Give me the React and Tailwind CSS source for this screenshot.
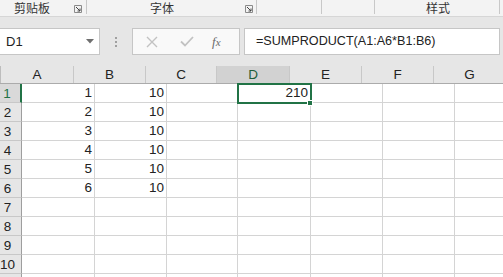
import React from "react";

const cols = [
  { l: "A", w: 73 },
  { l: "B", w: 72 },
  { l: "C", w: 71 },
  { l: "D", w: 73 },
  { l: "E", w: 72 },
  { l: "F", w: 72 },
  { l: "G", w: 72 },
];

const data = [
  ["1", "10", "", "210"],
  ["2", "10"],
  ["3", "10"],
  ["4", "10"],
  ["5", "10"],
  ["6", "10"],
  [],
  [],
  [],
  [],
  [],
];

function Launcher() {
  return (
    <svg width="8" height="8" viewBox="0 0 8 8" className="block">
      <path d="M0.5 0.5 H7.5 V7.5 H0.5 Z" fill="none" stroke="#8a8a8a" strokeWidth="1" />
      <path d="M2 2 L6 6 M3.5 6 H6 V3.5" fill="none" stroke="#444" strokeWidth="1" />
    </svg>
  );
}

export default function App() {
  const font = { fontFamily: '"Liberation Sans", Arial, "Noto Sans CJK SC", sans-serif' };
  return (
    <div className="w-[503px] h-[277px] overflow-hidden bg-white text-[#222]" style={font}>
      {/* ribbon group labels */}
      <div className="h-[17px] bg-[#f3f3f3] border-b border-[#d6d6d6] flex items-start text-[12px] leading-[16px] text-[#333]" style={{ fontFamily: '"Noto Sans CJK SC", "Liberation Sans", sans-serif' }}>
        <div className="w-[87px] h-[14px] flex items-start border-r border-[#c8c8c8]">
          <span className="ml-[14px]">剪贴板</span>
          <span className="ml-auto mr-[4px] mt-[5px]"><Launcher /></span>
        </div>
        <div className="w-[170px] h-[14px] flex items-start border-r border-[#c8c8c8]">
          <span className="ml-[63px]">字体</span>
          <span className="ml-auto mr-[3px] mt-[5px]"><Launcher /></span>
        </div>
        <div className="w-[65px] h-[14px] border-r border-[#c8c8c8]" />
        <div className="w-[53px] h-[14px] border-r border-[#c8c8c8]" />
        <div className="w-[125px] h-[14px] flex items-start border-r border-[#c8c8c8]">
          <span className="ml-[51px]">样式</span>
        </div>
      </div>

      {/* formula bar */}
      <div className="h-[49px] bg-[#e6e6e6] pt-[11px] flex items-start">
        <div className="w-[100px] h-[27px] bg-white border border-[#c6c6c6] border-l-0 flex items-center text-[13px]">
          <span className="ml-[6px]">D1</span>
          <svg width="8" height="5" viewBox="0 0 8 5" className="ml-auto mr-[5px]">
            <path d="M0 0 H8 L4 4.5 Z" fill="#6f6f6f" />
          </svg>
        </div>
        <div className="w-[32px] h-[27px] flex flex-col items-center justify-center gap-[2px]">
          <div className="w-[2px] h-[2px] bg-[#a0a0a0]" />
          <div className="w-[2px] h-[2px] bg-[#a0a0a0]" />
          <div className="w-[2px] h-[2px] bg-[#a0a0a0]" />
        </div>
        <div className="w-[108px] h-[27px] bg-[#f9f9f9] border border-[#c6c6c6] flex items-center">
          <svg width="12" height="12" viewBox="0 0 12 12" className="ml-[13px]">
            <path d="M1 1 L11 11 M11 1 L1 11" stroke="#c2c2c2" strokeWidth="1.4" fill="none" />
          </svg>
          <svg width="14" height="11" viewBox="0 0 14 11" className="ml-[22px]">
            <path d="M1 5.5 L5 9.5 L13 1" stroke="#c2c2c2" strokeWidth="1.8" fill="none" />
          </svg>
          <span className="ml-[18px] text-[13px] italic text-[#6a6a6a]" style={{ fontFamily: '"Liberation Serif", serif' }}>
            f<span className="text-[11px]">x</span>
          </span>
        </div>
        <div className="ml-[4px] w-[256px] h-[27px] bg-white border border-[#c6c6c6] flex items-center text-[12.6px]">
          <span className="ml-[11px]">=SUMPRODUCT(A1:A6*B1:B6)</span>
        </div>
      </div>

      {/* grid */}
      <div className="relative">
        {/* header row */}
        <div className="flex h-[18px] bg-[#e6e6e6] border-b border-[#ababab] text-[13.5px] leading-[17px]">
          <div className="w-[22px] h-full border-r border-[#bdbdbd] relative">
            <svg width="11" height="11" viewBox="0 0 11 11" className="absolute right-[3px] bottom-[3px]">
              <path d="M11 0 L11 11 L0 11 Z" fill="#b9b9b9" />
            </svg>
          </div>
          {cols.map((c) => (
            <div
              key={c.l}
              className={
                "h-full shrink-0 border-r border-[#c8c8c8] text-center " +
                (c.l === "D" ? "bg-[#d2d2d2] text-[#1e5e3a]" : "text-[#222]")
              }
              style={{ width: c.w }}
            >
              {c.l}
            </div>
          ))}
        </div>
        {data.map((row, i) => (
          <div key={i} className="flex h-[19px] text-[13.5px] leading-[19px]">
            <div
              className={
                "w-[22px] h-full shrink-0 border-b border-[#c8c8c8] pr-[6px] text-center " +
                (i === 0
                  ? "bg-[#d9d9d9] border-r-2 border-r-[#217346] text-[#217346]"
                  : "bg-[#e6e6e6] border-r border-r-[#9e9e9e] text-[#222]")
              }
            >
              {i < 10 ? i + 1 : ""}
            </div>
            {cols.map((c, j) => (
              <div
                key={c.l}
                className="h-full shrink-0 border-r border-b border-[#d4d4d4] text-right pr-[2px] leading-[18px]"
                style={{ width: c.w }}
              >
                {row[j] || ""}
              </div>
            ))}
          </div>
        ))}
        {/* selection on D1 */}
        <div className="absolute left-[237px] top-[17px] w-[75px] h-[21px] border-2 border-[#217346]" />
        <div className="absolute left-[307px] top-[34px] w-[6px] h-[6px] bg-[#217346] border border-white" />
      </div>
    </div>
  );
}
